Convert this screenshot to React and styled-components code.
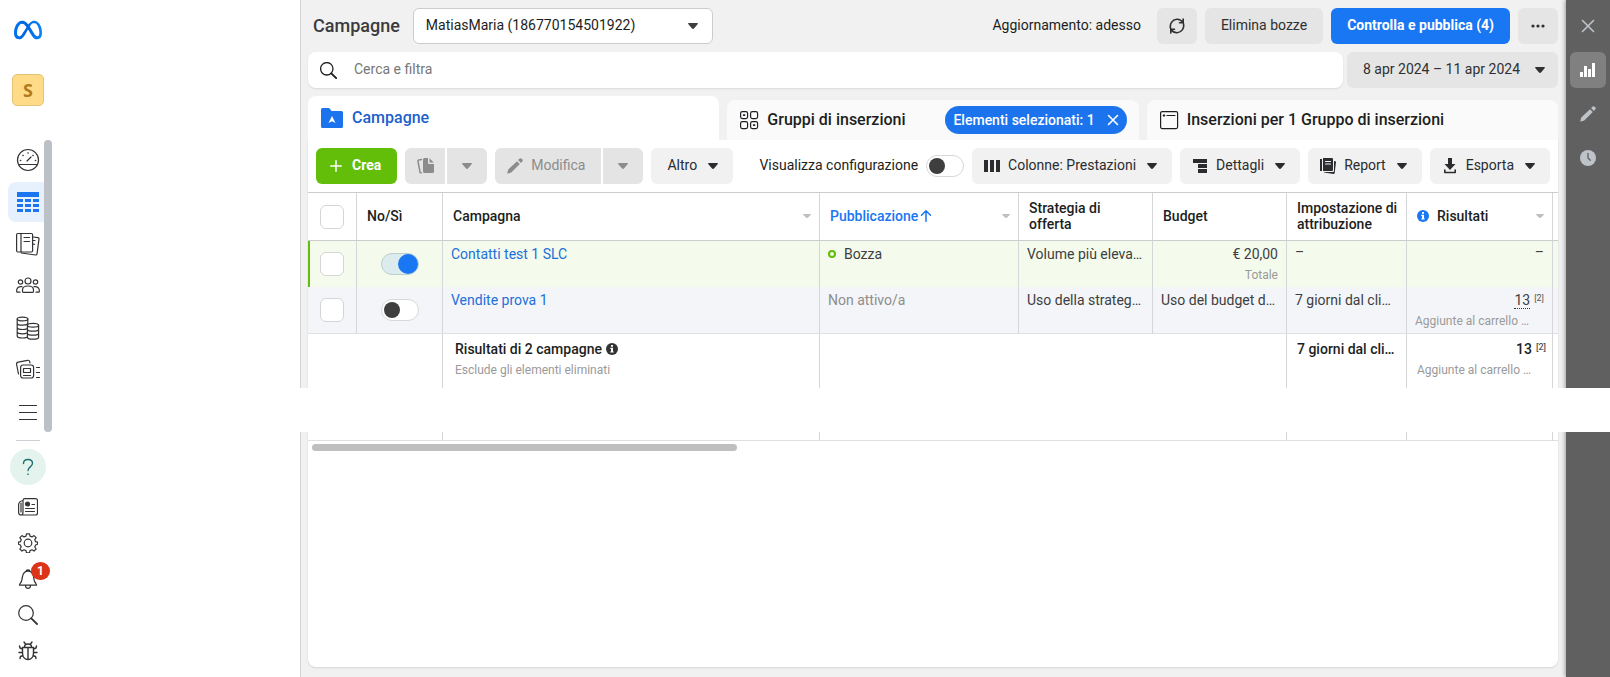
import React, { useState } from "react";
import styled, { createGlobalStyle, css } from "styled-components";
import { SiMeta } from "react-icons/si";

const GlobalStyle = createGlobalStyle`
  *, *::before, *::after { box-sizing: border-box; }
  body {
    margin: 0;
    background: #fff;
    color: #1c1e21;
    font: 14px/20px Roboto, "Liberation Sans", sans-serif;
  }
  button, input, select { font: inherit; color: inherit; }
  button { cursor: pointer; }
  svg { display: block; flex: none; }
`;

/* ---------- page frame ---------- */

const Page = styled.div`
  display: grid;
  grid-template-columns: 56px minmax(0, 244px) minmax(1100px, 1fr);
  min-height: 100vh;
`;

const Workspace = styled.div`
  grid-column: 3;
  position: relative;
  display: flex;
`;

const Main = styled.main`
  flex: 1;
  min-width: 0;
  display: flex;
  flex-direction: column;
  padding: 8px 8px 10px 7px;
  background: #f1f1f1;
  border-left: 1px solid #d2d2d2;
`;

const BlankBand = styled.div`
  position: absolute;
  z-index: 2;
  top: 388px;
  left: 0;
  right: 0;
  height: 44px;
  background: #fff;
`;

/* ---------- left navigation ---------- */

const SideNav = styled.nav`
  display: flex;
  flex-direction: column;
  color: #333;
`;

const LogoLink = styled.a`
  display: flex;
  padding: 16px 0 16px 14px;
  height: 60px;
`;

const Avatar = styled.button`
  width: 32px;
  height: 32px;
  margin: 14px 0 34px 12px;
  padding: 0 0 1px;
  border: 1px solid #e3c478;
  border-radius: 5px;
  background: #ffdb87;
  color: #b17a1b;
  font: bold 18px/28px "Open Sans", sans-serif;
`;

const ScrollArea = styled.div`
  display: flex;
`;

const NavList = styled.div`
  display: flex;
  flex-direction: column;
  gap: 2px;
  width: 44px;
  padding-left: 8px;
`;

const NavItem = styled.a`
  display: flex;
  align-items: center;
  height: 40px;
  padding-left: 8px;
  border-radius: 8px 0 0 8px;
  color: ${(p) => (p.$active ? "#1b74f0" : "#333")};
  background: ${(p) => (p.$active ? "#e7f1fe" : "none")};
`;

const NavThumb = styled.div`
  width: 8px;
  border-radius: 4px;
  background: #bcc0c7;
`;

const NavRule = styled.hr`
  width: 24px;
  height: 1px;
  margin: 8px 0 8px 16px;
  border: 0;
  background: #ccd0d5;
`;

const NavTools = styled.div`
  display: flex;
  flex-direction: column;
  width: 56px;
  padding-left: 10px;
`;

const ToolButton = styled.button`
  position: relative;
  display: flex;
  align-items: center;
  justify-content: center;
  width: 36px;
  height: 36px;
  padding: 0;
  border: 0;
  border-radius: 50%;
  background: none;
  ${(p) => p.$help && css`
    margin-bottom: 4px;
    background: #e4f3ee;
    color: #1d6f72;
  `}
`;

const Badge = styled.span`
  position: absolute;
  top: 1px;
  right: -4px;
  width: 19px;
  height: 18px;
  border-radius: 9px;
  background: #dc3418;
  color: #fff;
  font-size: 12px;
  line-height: 18px;
  font-weight: 700;
`;

/* ---------- header rows ---------- */

const Row = styled.div`
  display: flex;
  align-items: center;
  gap: ${(p) => p.$gap || 8}px;
  margin-bottom: 8px;
`;

const Title = styled.h1`
  margin: 0 5px;
  font-size: 18px;
  line-height: 24px;
  font-weight: 500;
  color: #3a3b3d;
`;

const AccountField = styled.label`
  display: grid;
  align-items: center;
  width: 300px;
  svg { grid-area: 1 / 1; justify-self: end; margin-right: 12px; pointer-events: none; }
`;

const AccountSelect = styled.select`
  grid-area: 1 / 1;
  appearance: none;
  width: 100%;
  height: 36px;
  padding: 0 36px 2px 12px;
  border: 1px solid #ccc;
  border-radius: 6px;
  background: #fff;
  outline: none;
`;

const Updated = styled.span`
  margin: 0 8px 0 auto;
  padding-bottom: 2px;
`;

const tones = {
  grey: ["#e5e5e5", "#303030"],
  light: ["#f1f1f1", "#2a2c2f"],
  off: ["#e4e4e4", "#8c8c8c"],
  blue: ["#1977f3", "#fff"],
  green: ["#63be09", "#fff"],
};

const Button = styled.button`
  display: flex;
  align-items: center;
  justify-content: center;
  gap: ${(p) => p.$gap || 8}px;
  flex: none;
  min-width: 40px;
  height: 36px;
  padding: ${(p) => p.$pad || "0 16px"};
  border: 0;
  border-radius: ${(p) => (p.$join === "left" ? "6px 0 0 6px" : p.$join === "right" ? "0 6px 6px 0" : "6px")};
  background: ${(p) => tones[p.$tone][0]};
  color: ${(p) => tones[p.$tone][1]};
  font-weight: ${(p) => (p.$strong ? 700 : 400)};
  white-space: nowrap;
`;

const Label = styled.span`
  padding-bottom: 2px;
`;

const SplitButton = styled.div`
  display: flex;
  gap: 2px;
`;

const SearchField = styled.label`
  flex: 1;
  display: flex;
  align-items: center;
  gap: 17px;
  height: 36px;
  padding-left: 12px;
  border-radius: 8px;
  background: #fff;
  box-shadow: 0 1px 2px rgba(0, 0, 0, 0.1);
`;

const SearchInput = styled.input`
  flex: 1;
  height: 32px;
  padding: 0 0 2px;
  border: 0;
  outline: none;
  background: none;
  &::placeholder { color: #777; opacity: 1; }
`;

/* ---------- tabs ---------- */

const Tabs = styled.div`
  display: grid;
  grid-template-columns: repeat(3, minmax(0, 1fr));
  align-items: end;
  gap: 8px;
`;

const Tab = styled.div`
  display: flex;
  align-items: center;
  height: ${(p) => (p.$active ? 44 : 40)}px;
  padding: 0 12px;
  border-radius: 8px 8px 0 0;
  background: ${(p) => (p.$active ? "#fff" : "#fafafa")};
`;

const TabButton = styled.button`
  display: flex;
  align-items: center;
  gap: 8px;
  padding: 0;
  border: 0;
  background: none;
  color: ${(p) => (p.$active ? "#1d5fcb" : "#1c1e21")};
  font-size: 16px;
  font-weight: 500;
  white-space: nowrap;
`;

const Pill = styled.button`
  display: flex;
  align-items: center;
  gap: 12px;
  height: 28px;
  margin-left: auto;
  padding: 0 8px;
  border: 0;
  border-radius: 14px;
  background: #1b74ee;
  color: #fff;
  font-weight: 500;
  white-space: nowrap;
`;

/* ---------- card and toolbar ---------- */

const Card = styled.section`
  flex: 1;
  border-radius: 0 0 8px 8px;
  background: #fff;
  box-shadow: 0 1px 2px rgba(0, 0, 0, 0.12);
`;

const Toolbar = styled.div`
  display: flex;
  align-items: center;
  gap: 8px;
  padding: 8px;
`;

const SwitchLabel = styled.label`
  display: flex;
  align-items: center;
  gap: 8px;
  margin-left: auto;
  white-space: nowrap;
`;

const Switch = styled.input.attrs({ type: "checkbox", role: "switch" })`
  appearance: none;
  display: inline-flex;
  align-items: center;
  width: 38px;
  height: 22px;
  margin: 0;
  padding: 0 2px;
  border: 1px solid #d8d8d8;
  border-radius: 11px;
  background: #fff;
  vertical-align: middle;
  &::before {
    content: "";
    width: 16px;
    height: 16px;
    border-radius: 50%;
    background: #3e3e3e;
  }
  &:checked {
    justify-content: flex-end;
    padding: 0;
    border-color: #bccfcf;
    background: #dcecee;
  }
  &:checked::before {
    width: 20px;
    height: 20px;
    background: #1977f3;
  }
`;

const CheckBox = styled.input.attrs({ type: "checkbox" })`
  appearance: none;
  display: block;
  width: 24px;
  height: 24px;
  margin: 0 auto;
  border: 1px solid #d4d5d8;
  border-radius: 6px;
  background: #fff;
  &:checked { background: #1977f3; }
`;

/* ---------- table ---------- */

const Table = styled.table`
  width: 100%;
  table-layout: fixed;
  border-spacing: 0;
  border-top: 1px solid #ccc;
`;

const Col = styled.col`
  width: ${(p) => p.$w};
`;

const Head = styled.th`
  height: 48px;
  padding: ${(p) => (p.$tight ? "0" : "0 8px 2px 10px")};
  border-right: 1px solid #d5d6d9;
  border-bottom: 1px solid #ccc;
  text-align: left;
  line-height: 16px;
  font-weight: 500;
  color: ${(p) => (p.$sorted ? "#1977f3" : "#1c1e21")};
  &:last-child { border-right: 0; }
`;

const HeadFlex = styled.div`
  display: flex;
  align-items: center;
  gap: ${(p) => p.$gap || 2}px;
  svg:last-child { margin-left: auto; }
`;

const BodyRow = styled.tr`
  background: ${(p) => (p.$draft ? "#f4fbec" : "#f4f5f8")};
  td:first-child { box-shadow: ${(p) => (p.$draft ? "inset 2px 0 #63be09" : "none")}; }
  &:last-child td { height: 47px; border-bottom: 1px solid #dfe0e3; }
`;

const Cell = styled.td`
  height: 46px;
  padding: 3px 8px 0;
  border-right: 1px solid #d5d6d9;
  vertical-align: ${(p) => (p.$mid ? "middle" : "top")};
  text-align: ${(p) => (p.$end ? "right" : "left")};
  color: ${(p) => (p.$muted ? "#8d8d8d" : "#3c3e41")};
  white-space: nowrap;
  overflow: hidden;
  &:last-child { border-right: 0; }
  ${(p) => p.$mid && css`
    padding: 0;
    text-align: center;
  `}
`;

const FootCell = styled.td`
  height: 107px;
  padding: 5px 6px 0 ${(p) => (p.$wide ? 12 : 10)}px;
  border-right: 1px solid #d5d6d9;
  border-bottom: 1px solid #dfe0e3;
  vertical-align: top;
  font-weight: 500;
  white-space: nowrap;
  overflow: hidden;
  &:last-child { border-right: 0; }
`;

const Link = styled.a`
  color: #216fdb;
  text-decoration: none;
`;

const Sub = styled.div`
  font-size: 12px;
  line-height: 22px;
  font-weight: 400;
  text-align: ${(p) => (p.$end ? "right" : "left")};
  color: #9a9a9a;
`;

const Inline = styled.div`
  display: flex;
  align-items: center;
  justify-content: ${(p) => (p.$end ? "flex-end" : "flex-start")};
  gap: ${(p) => p.$gap || 4}px;
  height: 20px;
`;

const Ref = styled.span`
  align-self: flex-start;
  font-size: 9px;
  line-height: 16px;
  color: #555;
`;

const Dotted = styled.span`
  line-height: 16px;
  border-bottom: 1px dotted #333;
`;

const Dash = styled.div`
  line-height: 16px;
`;

const StatusDot = styled.span`
  width: 8px;
  height: 8px;
  margin-right: 4px;
  border: 2px solid #63be09;
  border-radius: 50%;
`;

const TableScroll = styled.div`
  width: 34%;
  height: 7px;
  margin: 3px 4px;
  border-radius: 4px;
  background: #bfbfbf;
`;

/* ---------- right rail ---------- */

const Rail = styled.aside`
  display: flex;
  flex-direction: column;
  gap: 8px;
  width: 44px;
  padding: 8px 4px;
  background: #606060;
  box-shadow: -1px 0 4px rgba(0, 0, 0, 0.35);
`;

const RailButton = styled.button`
  display: flex;
  align-items: center;
  justify-content: center;
  height: 36px;
  padding: 0;
  border: 0;
  border-radius: 6px;
  background: ${(p) => (p.$active ? "#808080" : "none")};
  color: ${(p) => (p.$active ? "#fff" : "#bec2c9")};
`;

/* ---------- icons ---------- */

const Svg = ({ w = 24, h, s = 1.2, children, fill = "none", box }) => (
  <svg
    width={box || w}
    height={h || w}
    viewBox={`${box ? (w - box) / 2 : 0} 0 ${box || w} ${h || w}`}
    fill={fill}
    stroke={fill === "none" ? "currentColor" : "none"}
    strokeWidth={s}
    strokeLinecap="round"
    strokeLinejoin="round"
    aria-hidden="true"
  >
    {children}
  </svg>
);

const Caret = ({ color = "currentColor" }) => (
  <Svg w={16} h={6} fill={color}>
    <path d="M3.600 0h8.800a.6.6 0 0 1 .4 1L9.200 5.300a1.600 1.600 0 0 1-2.400 0L3.200 1a.6.6 0 0 1 .4-1z" />
  </Svg>
);

const SortCaret = () => (
  <Svg w={8} h={4} fill="#bcc0c4">
    <path d="M.6 0h6.800a.5.5 0 0 1 .3.900L5 3.600a1.400 1.400 0 0 1-2 0L.3.900A.5.5 0 0 1 .6 0z" />
  </Svg>
);

const GaugeIcon = () => (
  <Svg>
    <circle cx="12" cy="12" r="10.500" />
    <path d="M2.500 16.500h19M11 13l4-4" />
    <path d="M4.500 12.500h.1M7 7.500h.1M12 5h.1M17 7.500h.1M19.500 12.500h.1" strokeWidth="1.600" />
  </Svg>
);
const GridIcon = () => (
  <Svg w={24} fill="currentColor">
    <path d="M1 2h22v5H1zM1 9h6v3H1zM9 9h6v3H9zM17 9h6v3h-6zM1 14h6v3H1zM9 14h6v3H9zM17 14h6v3h-6zM1 19h6v3H1zM9 19h6v3H9zM17 19h6v3h-6z" />
  </Svg>
);
const BookIcon = () => (
  <Svg>
    <rect x=".6" y="1.500" width="16" height="18.500" rx="1.200" />
    <path d="M5 1.500V20M8 5.500h5.500M8 9.500h5.500M17 5l5 .7a1.200 1.200 0 0 1 1 1.400l-2 14.900a1.200 1.200 0 0 1-1.400 1L5.500 21" />
    <path d="M17 8.500h2M17 12l1.500.3" />
  </Svg>
);
const PeopleIcon = () => (
  <Svg>
    <circle cx="12" cy="7" r="3" />
    <circle cx="4.500" cy="8" r="2.200" />
    <circle cx="19.500" cy="8" r="2.200" />
    <path d="M6.500 17.500v-1.500c0-2.500 2-4 5.500-4s5.500 1.500 5.500 4v1.500a.8.8 0 0 1-.8.800H7.300a.8.8 0 0 1-.8-.8zM4 18.200H1.400a.8.8 0 0 1-.8-.8c0-3.600 1.800-5.200 5.400-4.700M20 18.200h2.600a.8.800 0 0 0 .8-.8c0-3.600-1.800-5.200-5.400-4.700" />
  </Svg>
);
const CoinsIcon = () => (
  <Svg>
    <ellipse cx="6.500" cy="3" rx="5.300" ry="1.900" />
    <path d="M1.200 3v17c0 1.200 2.300 2 5.300 2 2 0 3.500-.3 4.500-.8M11.800 3v5M1.200 7.200c0 1.200 2.300 2 5.300 2 2.200 0 4.300-.5 5-1.200M1.200 11.500c0 1.200 2.300 2 5.300 2 1.900 0 3.500-.3 4.500-.8M1.200 15.800c0 1.200 2.300 2 5.300 2 1.900 0 3.500-.3 4.500-.8" />
    <ellipse cx="17" cy="9.200" rx="5.600" ry="1.900" />
    <path d="M11.400 9.200v12c0 1.200 2.500 2 5.600 2s5.600-.8 5.600-2v-12M11.400 13.200c0 1.200 2.500 2 5.600 2s5.600-.8 5.600-2M11.400 17.200c0 1.200 2.500 2 5.600 2s5.600-.8 5.600-2" />
  </Svg>
);
const CardsIcon = () => (
  <Svg>
    <rect x="4.600" y="7" width="13" height="13" rx="2.500" />
    <path d="M7.500 10.500h7v4h-7zM7.500 17.500h7M20.500 9.500h3M20.500 14.500h3M20.500 19.500h3" />
    <path d="M2.500 16L.6 6.500a2 2 0 0 1 1.600-2.300l9.300-1.900a2 2 0 0 1 2.300 1.600L14 5" />
  </Svg>
);
const LinesIcon = () => (
  <Svg>
    <path d="M3.500 5.500h17M3.500 12.500h17M3.500 19.500h17" />
  </Svg>
);
const HelpIcon = () => (
  <Svg s={1.400}>
    <path d="M7.500 8.500C7.500 6 9.300 4.500 12 4.500s4.500 1.500 4.500 3.800c0 3.700-4.500 3.400-4.500 7.200M12 19v.4" />
  </Svg>
);
const NewsIcon = () => (
  <Svg w={20}>
    <path d="M5 3.500A2 2 0 0 1 7 1.600h10.500a2 2 0 0 1 2 2V16a2 2 0 0 1-2 2H3.500M5 3.500V15c0 1.800-.6 3-1.800 3S.6 17 .6 15.500V8c0-2 1.500-4 4.400-4.500M3 6v9" />
    <circle cx="9.500" cy="7" r="2" fill="currentColor" />
    <path d="M14 7.500h2.500M7.500 11.500h9M7.500 14.500h9" />
  </Svg>
);
const GearIcon = () => (
  <Svg w={20}>
    <circle cx="10" cy="10" r="3.800" />
    <path d="M8.500 .8h3l.5 2.300 2 .8 2-1.300 2.100 2.100-1.300 2 .8 2 1.900.4v2.200l-1.900.7-.8 2 1.300 2-2.100 2.100-2-1.300-2 .8-.5 2.300h-3L8 17.600l-2-.8-2 1.300L1.900 16l1.300-2-.8-2-1.900-.7V9.100l1.900-.4.8-2-1.300-2L4 2.600l2 1.300 2-.8z" />
  </Svg>
);
const BellIcon = () => (
  <Svg w={20}>
    <path d="M1.500 16.200c-.4-.8.200-1.300 1-2.200 1.800-2 1.200-3.500 2-6.500C5.200 4 7 2.200 10 2.200s4.800 1.800 5.500 5.300c.8 3 .2 4.500 2 6.500.8.900 1.400 1.400 1 2.200zM8 2.500c0-2.200 4-2.200 4 0M7.500 16.500c0 3.700 5 3.700 5 0" />
  </Svg>
);
const SearchIcon = ({ w = 20, s = 1.200 }) => (
  <svg width={w} height={w} viewBox="0 0 20 20" fill="none" stroke="currentColor" strokeLinecap="round" aria-hidden="true">
    <circle cx="8" cy="8" r="7.300" strokeWidth={s} />
    <path d="M13.300 13.300L19 19" strokeWidth={s * 1.500} />
  </svg>
);
const BugIcon = () => (
  <Svg w={20} s={1.400}>
    <path d="M6.500 6C6.500 4 8 3 10 3s3.500 1 3.500 3M4.500 6.500h11v5.500c0 4-2.500 6.500-5.500 6.500S4.500 16 4.500 12zM10 7v11.500M7.500 3L6 1M12.500 3L14 1M4.500 8L2 7l-.5-2M15.500 8L18 7l.5-2M4.500 11.500H1M15.500 11.500H19M5 14.500l-2.500 1-.5 2M15 14.500l2.500 1 .5 2" />
  </Svg>
);
const RefreshIcon = () => (
  <Svg w={16} s={1.600}>
    <path d="M1.600 10.500C.4 6 3.200 1.700 7.800 1.300c2.700-.1 4.700 1 6 3.200M14.400 5.500c1.200 4.500-1.600 8.800-6.200 9.200-2.700.1-4.700-1-6-3.200M14.200 1v3.700h-3.700M1.800 15v-3.700h3.700" />
  </Svg>
);
const DotsIcon = () => (
  <Svg w={14} h={4} fill="currentColor">
    <circle cx="2" cy="2" r="1.600" /><circle cx="7" cy="2" r="1.600" /><circle cx="12" cy="2" r="1.600" />
  </Svg>
);
const FolderIcon = () => (
  <Svg w={22} h={20} box={24} fill="#1b74ee">
    <path d="M0 1.500A1.500 1.500 0 0 1 1.500 0h6a1.500 1.500 0 0 1 1.200.6L10.500 3h10A1.500 1.500 0 0 1 22 4.500v14a1.500 1.500 0 0 1-1.500 1.500h-19A1.500 1.500 0 0 1 0 18.500z" />
    <path d="M11 8l3.500 7-3.500-1.800L7.500 15z" fill="#fff" />
  </Svg>
);
const GroupsIcon = () => (
  <Svg w={20}>
    <rect x="1.600" y="1.600" width="7" height="7" rx="1.800" /><rect x="11.600" y="1.600" width="7" height="7" rx="1.800" />
    <rect x="1.600" y="11.600" width="7" height="7" rx="1.800" /><rect x="11.600" y="11.600" width="7" height="7" rx="1.800" />
    <path d="M4.700 5.100h.8M14.700 15.100h.8" strokeWidth="1.800" />
  </Svg>
);
const AdIcon = () => (
  <Svg w={20}>
    <rect x="1.600" y="1.600" width="17" height="17" rx="1.500" />
    <path d="M4.200 5.500h1.600M5 4.700v1.600M8 5.500h8" />
  </Svg>
);
const CloseIcon = ({ w = 12, s = 1.600 }) => (
  <Svg w={w} s={s}>
    <path d={`M1.500 1.500L${w - 1.500} ${w - 1.500}M${w - 1.500} 1.500L1.500 ${w - 1.500}`} />
  </Svg>
);
const PlusIcon = () => (
  <Svg w={12} s={1.500} box={16}>
    <path d="M6 .8v10.400M.8 6h10.400" />
  </Svg>
);
const CopyIcon = () => (
  <Svg w={17} h={16} fill="currentColor">
    <path d="M7.500 0H11v5a1 1 0 0 0 1 1h5v7.500a1.500 1.500 0 0 1-1.500 1.500h-8A1.500 1.500 0 0 1 6 13.500v-12A1.500 1.500 0 0 1 7.500 0zM12.500 .2L16.800 4.500h-4.300z" />
    <path d="M4.500 1.600L1.800 2.100a1 1 0 0 0-.8 1.200L3 14a1 1 0 0 0 1.200.8" fill="none" stroke="currentColor" strokeWidth="1.500" />
  </Svg>
);
const PencilIcon = () => (
  <Svg w={16} fill="currentColor">
    <path d="M10 3.200L12.800 6 4.500 14.300a2 2 0 0 1-.9.500L.9 15.500a.5.500 0 0 1-.6-.6L1 12.200a2 2 0 0 1 .5-.9zM11.100 2.100l1.300-1.300a1.700 1.700 0 0 1 2.400 0l.4.400a1.700 1.700 0 0 1 0 2.400l-1.300 1.300z" />
  </Svg>
);
const ColumnsIcon = () => (
  <Svg w={16} h={12} fill="currentColor">
    <path d="M0 0h4v12H0zM6 0h4v12H6zM12 0h4v12h-4z" />
  </Svg>
);
const BreakdownIcon = () => (
  <Svg w={14} h={14} box={16} fill="currentColor">
    <path d="M0 0h14v4H0zM5 5h9v4H5zM5 10h9v4H5z" />
  </Svg>
);
const ReportIcon = () => (
  <Svg w={16} fill="currentColor">
    <path d="M0 1h2v12H0zM3 0h9a1 1 0 0 1 1 1v11a1 1 0 0 1-1 1H3zM14 3l1.300.2a.8.8 0 0 1 .7.900l-1.300 11a.9.9 0 0 1-1 .8L4 14.500V14h9a1 1 0 0 0 1-1z" />
    <path d="M5.500 3.500h5M5.500 6h5" stroke="#f1f1f1" />
  </Svg>
);
const ExportIcon = () => (
  <Svg w={12} h={16} box={16} fill="currentColor">
    <path d="M4 0h4v6h3.500L6 12 .5 6H4z" />
    <path d="M.8 12v2.500h10.400V12" fill="none" stroke="currentColor" strokeWidth="1.600" />
  </Svg>
);
const InfoIcon = ({ color, hole = "#fff" }) => (
  <Svg w={12} fill={color}>
    <circle cx="6" cy="6" r="6" />
    <path d="M5 2h2v1.800H5zM4.300 4.800H7V8.400h.7v1.100H4.300V8.400H5V5.900h-.7z" fill={hole} />
  </Svg>
);
const ArrowUp = () => (
  <Svg w={12} h={12} s={1.500}>
    <path d="M6 11.300V1M1.500 5.200L6 .8l4.500 4.400" />
  </Svg>
);
const ChartIcon = () => (
  <Svg w={16} fill="currentColor">
    <path d="M0 10h3v5H0zM4 4h3v11H4zM8 7h3v8H8zM12 1h3v14h-3z" />
  </Svg>
);
const ClockIcon = () => (
  <Svg w={16} fill="currentColor">
    <circle cx="8" cy="8" r="8" />
    <path d="M8 3.500V8l2.300 2.300" fill="none" stroke="#606060" strokeWidth="1.300" />
  </Svg>
);

/* ---------- sections ---------- */

const navItems = [
  ["Panoramica", GaugeIcon],
  ["Campagne", GridIcon],
  ["Report", BookIcon],
  ["Pubblico", PeopleIcon],
  ["Fatturazione", CoinsIcon],
  ["Inserzioni", CardsIcon],
  ["Tutti gli strumenti", LinesIcon],
];

function Navigation() {
  return (
    <SideNav>
      <LogoLink href="#" aria-label="Meta">
        <svg width="0" height="0" aria-hidden="true">
          <linearGradient id="meta" x1="0" x2="1">
            <stop offset="0" stopColor="#0074f0" />
            <stop offset=".45" stopColor="#0064e0" />
            <stop offset="1" stopColor="#0a86fb" />
          </linearGradient>
        </svg>
        <SiMeta size={28} fill="url(#meta)" />
      </LogoLink>
      <Avatar>S</Avatar>
      <ScrollArea>
        <NavList>
          {navItems.map(([name, Icon], i) => (
            <NavItem key={name} href="#" aria-label={name} $active={i === 1}>
              <Icon />
            </NavItem>
          ))}
        </NavList>
        <NavThumb />
      </ScrollArea>
      <NavRule />
      <NavTools>
        <ToolButton $help aria-label="Aiuto"><HelpIcon /></ToolButton>
        <ToolButton aria-label="Novità"><NewsIcon /></ToolButton>
        <ToolButton aria-label="Impostazioni"><GearIcon /></ToolButton>
        <ToolButton aria-label="Notifiche"><BellIcon /><Badge>1</Badge></ToolButton>
        <ToolButton aria-label="Cerca"><SearchIcon /></ToolButton>
        <ToolButton aria-label="Segnala un problema"><BugIcon /></ToolButton>
      </NavTools>
    </SideNav>
  );
}

function TopBar() {
  return (
    <>
      <Row>
        <Title>Campagne</Title>
        <AccountField>
          <AccountSelect aria-label="Account">
            <option>MatiasMaria (186770154501922)</option>
          </AccountSelect>
          <Caret color="#3c3e41" />
        </AccountField>
        <Updated>Aggiornamento: adesso</Updated>
        <Button $tone="grey" $pad="0" aria-label="Aggiorna"><RefreshIcon /></Button>
        <Button $tone="grey"><Label>Elimina bozze</Label></Button>
        <Button $tone="blue" $strong><Label>Controlla e pubblica (4)</Label></Button>
        <Button $tone="grey" $pad="0" aria-label="Altro"><DotsIcon /></Button>
      </Row>
      <Row $gap={4}>
        <SearchField>
          <SearchIcon w={17} s={1.500} />
          <SearchInput placeholder="Cerca e filtra" aria-label="Cerca e filtra" />
        </SearchField>
        <Button $tone="grey" $pad="0 10px 0 16px" $gap={12}>
          <Label>8 apr 2024 – 11 apr 2024</Label>
          <Caret />
        </Button>
      </Row>
    </>
  );
}

function Levels() {
  return (
    <Tabs>
      <Tab $active>
        <TabButton $active><FolderIcon />Campagne</TabButton>
      </Tab>
      <Tab>
        <TabButton><GroupsIcon />Gruppi di inserzioni</TabButton>
        <Pill>Elementi selezionati: 1<CloseIcon /></Pill>
      </Tab>
      <Tab>
        <TabButton><AdIcon />Inserzioni per 1 Gruppo di inserzioni</TabButton>
      </Tab>
    </Tabs>
  );
}

function Actions() {
  return (
    <Toolbar>
      <Button $tone="green" $strong $pad="0 16px 0 12px"><PlusIcon /><Label>Crea</Label></Button>
      <SplitButton>
        <Button $tone="off" $join="left" $pad="0" aria-label="Duplica"><CopyIcon /></Button>
        <Button $tone="off" $join="right" $pad="0" aria-label="Opzioni di duplicazione"><Caret /></Button>
      </SplitButton>
      <SplitButton>
        <Button $tone="off" $join="left" $pad="0 16px 0 12px"><PencilIcon /><Label>Modifica</Label></Button>
        <Button $tone="off" $join="right" $pad="0" aria-label="Opzioni di modifica"><Caret /></Button>
      </SplitButton>
      <Button $tone="light" $pad="0 12px 0 16px"><Label>Altro</Label><Caret /></Button>
      <SwitchLabel><Label>Visualizza configurazione</Label><Switch /></SwitchLabel>
      <Button $tone="light" $pad="0 12px"><ColumnsIcon /><Label>Colonne: Prestazioni</Label><Caret /></Button>
      <Button $tone="light" $pad="0 12px"><BreakdownIcon /><Label>Dettagli</Label><Caret /></Button>
      <Button $tone="light" $pad="0 12px"><ReportIcon /><Label>Report</Label><Caret /></Button>
      <Button $tone="light" $pad="0 12px"><ExportIcon /><Label>Esporta</Label><Caret /></Button>
    </Toolbar>
  );
}

function Campaigns() {
  const [on, setOn] = useState([true, false]);
  const flip = (i) => setOn(on.map((v, k) => (k === i ? !v : v)));
  return (
    <Table>
      <colgroup>
        {["49px", "86px", "auto", "199px", "134px", "134px", "120px", "146px", "5px"].map((w, i) => (
          <Col key={i} $w={w} />
        ))}
      </colgroup>
      <thead>
        <tr>
          <Head $tight><CheckBox aria-label="Seleziona tutto" /></Head>
          <Head>No/Sì</Head>
          <Head><HeadFlex>Campagna<SortCaret /></HeadFlex></Head>
          <Head $sorted><HeadFlex>Pubblicazione<ArrowUp /><SortCaret /></HeadFlex></Head>
          <Head>Strategia di<br />offerta</Head>
          <Head>Budget</Head>
          <Head>Impostazione di<br />attribuzione</Head>
          <Head><HeadFlex $gap={8}><InfoIcon color="#1977f3" />Risultati<SortCaret /></HeadFlex></Head>
          <Head $tight />
        </tr>
      </thead>
      <tbody>
        <BodyRow $draft>
          <Cell $mid><CheckBox aria-label="Contatti test 1 SLC" /></Cell>
          <Cell $mid><Switch aria-label="Contatti test 1 SLC" checked={on[0]} onChange={() => flip(0)} /></Cell>
          <Cell><Link href="#">Contatti test 1 SLC</Link></Cell>
          <Cell><Inline><StatusDot />Bozza</Inline></Cell>
          <Cell>Volume più eleva…</Cell>
          <Cell $end>€ 20,00<Sub $end>Totale</Sub></Cell>
          <Cell><Dash>–</Dash></Cell>
          <Cell $end><Dash>–</Dash></Cell>
          <Cell />
        </BodyRow>
        <BodyRow>
          <Cell $mid><CheckBox aria-label="Vendite prova 1" /></Cell>
          <Cell $mid><Switch aria-label="Vendite prova 1" checked={on[1]} onChange={() => flip(1)} /></Cell>
          <Cell><Link href="#">Vendite prova 1</Link></Cell>
          <Cell $muted>Non attivo/a</Cell>
          <Cell>Uso della strateg…</Cell>
          <Cell>Uso del budget d…</Cell>
          <Cell>7 giorni dal cli…</Cell>
          <Cell>
            <Inline $end><Dotted>13</Dotted><Ref>[2]</Ref></Inline>
            <Sub>Aggiunte al carrello …</Sub>
          </Cell>
          <Cell />
        </BodyRow>
      </tbody>
      <tfoot>
        <tr>
          <FootCell colSpan={2} />
          <FootCell $wide>
            <Inline>Risultati di 2 campagne<InfoIcon color="#333" /></Inline>
            <Sub>Esclude gli elementi eliminati</Sub>
          </FootCell>
          <FootCell colSpan={3} />
          <FootCell>7 giorni dal cli…</FootCell>
          <FootCell>
            <Inline $end>13<Ref>[2]</Ref></Inline>
            <Sub>Aggiunte al carrello …</Sub>
          </FootCell>
          <FootCell />
        </tr>
      </tfoot>
    </Table>
  );
}

export default function App() {
  return (
    <>
      <GlobalStyle />
      <Page>
        <Navigation />
        <Workspace>
          <Main>
            <TopBar />
            <Levels />
            <Card>
              <Actions />
              <Campaigns />
              <TableScroll />
            </Card>
          </Main>
          <Rail>
            <RailButton aria-label="Chiudi"><CloseIcon w={14} /></RailButton>
            <RailButton $active aria-label="Grafici"><ChartIcon /></RailButton>
            <RailButton aria-label="Modifica"><PencilIcon /></RailButton>
            <RailButton aria-label="Cronologia"><ClockIcon /></RailButton>
          </Rail>
          <BlankBand />
        </Workspace>
      </Page>
    </>
  );
}
